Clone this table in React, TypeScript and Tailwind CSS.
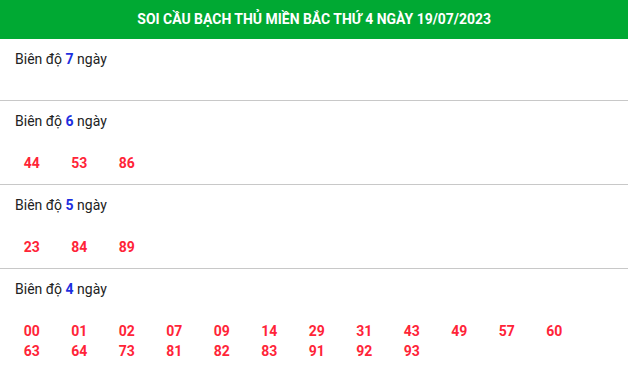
const sections: { days: number; nums: string[] }[] = [
  { days: 7, nums: [] },
  { days: 6, nums: ["44", "53", "86"] },
  { days: 5, nums: ["23", "84", "89"] },
  {
    days: 4,
    nums: [
      "00", "01", "02", "07", "09", "14", "29", "31", "43", "49", "57", "60",
      "63", "64", "73", "81", "82", "83", "91", "92", "93",
    ],
  },
];

export default function App() {
  return (
    <div className="w-[628px] h-[372px] overflow-hidden bg-white font-['Roboto',sans-serif]">
      <div className="h-[39px] bg-[#00a933] flex items-center justify-center">
        <span className="inline-block text-white font-bold text-[15px] scale-x-[0.93] whitespace-nowrap">
          SOI CẦU BẠCH THỦ MIỀN BẮC THỨ 4 NGÀY 19/07/2023
        </span>
      </div>
      {sections.map((s) => (
        <div key={s.days} className="pt-[10px] pb-[10px] border-b border-[#c8c8c8]">
          <div className="h-[20px] leading-[20px] pl-[15px] text-[14px] text-[#222]">
            Biên độ <span className="font-bold text-[#1d2fe0]">{s.days}</span> ngày
          </div>
          <div className="mt-[21px] ml-2 w-[570px] grid grid-cols-12 gap-y-0">
            {s.nums.map((n, i) => (
              <div
                key={n}
                className={
                  i < 12
                    ? "h-[22px] leading-[22px] text-center text-[14px] font-bold text-[#ff2438]"
                    : "h-[21px] leading-[19px] text-center text-[14px] font-bold text-[#ff2438]"
                }
              >
                {n}
              </div>
            ))}
          </div>
        </div>
      ))}
    </div>
  );
}
